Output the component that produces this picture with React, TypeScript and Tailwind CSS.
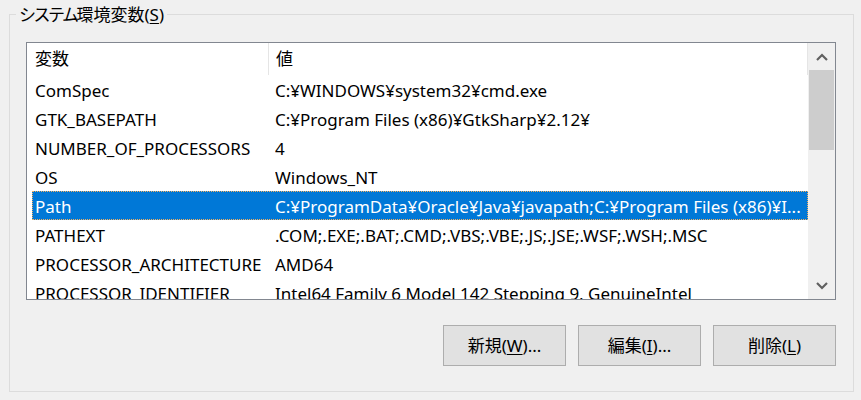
import type { ReactNode } from 'react';

const FONT = { fontFamily: '"Noto Sans", "Noto Sans CJK JP", sans-serif' };

type Row = { name: string; value: string };

const ROWS: Row[] = [
  { name: 'ComSpec', value: 'C:¥WINDOWS¥system32¥cmd.exe' },
  { name: 'GTK_BASEPATH', value: 'C:¥Program Files (x86)¥GtkSharp¥2.12¥' },
  { name: 'NUMBER_OF_PROCESSORS', value: '4' },
  { name: 'OS', value: 'Windows_NT' },
  { name: 'Path', value: 'C:¥ProgramData¥Oracle¥Java¥javapath;C:¥Program Files (x86)¥I...' },
  { name: 'PATHEXT', value: '.COM;.EXE;.BAT;.CMD;.VBS;.VBE;.JS;.JSE;.WSF;.WSH;.MSC' },
  { name: 'PROCESSOR_ARCHITECTURE', value: 'AMD64' },
  { name: 'PROCESSOR_IDENTIFIER', value: 'Intel64 Family 6 Model 142 Stepping 9, GenuineIntel' },
];

const SELECTED = 'Path';

function Chevron({ down = false }: { down?: boolean }) {
  return (
    <svg width="12" height="8" viewBox="0 0 12 8" className="block">
      <polyline
        points={down ? '1,1 6,6 11,1' : '1,7 6,2 11,7'}
        fill="none"
        stroke="#606060"
        strokeWidth="2.2"
      />
    </svg>
  );
}

function Button({ children }: { children: ReactNode }) {
  return (
    <button className="flex h-[41px] w-[123px] items-center justify-center border border-[#adadad] bg-[#e1e1e1] text-[17px] text-black">
      {children}
    </button>
  );
}

export default function App() {
  return (
    <div className="h-[400px] w-[861px] overflow-hidden bg-[#f0f0f0] pl-[9px] pt-[14px] text-black" style={FONT}>
      {/* group box with caption sitting over the top border */}
      <div className="relative h-[378px] w-[845px] border border-[#dcdcdc] pl-[16px] pr-[17px] pt-[27px]">
        <span className="absolute left-[6px] top-[-12px] bg-[#f0f0f0] px-[3px] text-[17px] leading-[24px]">
          <span className="tracking-[-2.5px]">システム</span>
          環境変数(<span className="underline underline-offset-2">S</span>)
        </span>

        {/* list view */}
        <div className="flex h-[258px] w-[810px] border border-[#828790] bg-white">
          <div className="flex min-w-0 flex-1 flex-col">
            <div className="flex h-[32px] shrink-0 items-center text-[17px]">
              <div className="w-[241px] pl-[8px]">変数</div>
              <div className="h-full w-px bg-[#e5e5e5]" />
              <div className="flex-1 pl-[7px]">値</div>
              <div className="h-full w-px bg-[#e5e5e5]" />
            </div>
            <div className="min-h-0 flex-1 overflow-hidden pl-[5px]">
              {ROWS.map((r) => {
                const sel = r.name === SELECTED;
                return (
                  <div
                    key={r.name}
                    className={
                      sel
                        ? 'flex h-[29px] w-[776px] items-center border border-dotted border-[#f5b060] bg-[#0078d7] pt-[2px] text-[17px] text-white'
                        : 'flex h-[29px] w-[776px] items-center border border-transparent pt-[2px] text-[17px]'
                    }
                  >
                    <div className="w-[242px] shrink-0 overflow-hidden whitespace-nowrap pl-[2px]">{r.name}</div>
                    <div className="min-w-0 flex-1 overflow-hidden whitespace-nowrap">{r.value}</div>
                  </div>
                );
              })}
            </div>
          </div>

          {/* vertical scrollbar */}
          <div className="flex w-[27px] shrink-0 flex-col bg-[#f0f0f0] px-px">
            <div className="flex h-[27px] shrink-0 items-center justify-center">
              <Chevron />
            </div>
            <div className="h-[80px] shrink-0 bg-[#cdcdcd]" />
            <div className="flex-1" />
            <div className="flex h-[27px] shrink-0 items-center justify-center">
              <Chevron down />
            </div>
          </div>
        </div>

        <div className="mt-[25px] flex justify-end gap-[12px]">
          <Button>
            新規(<span className="underline underline-offset-2">W</span>)...
          </Button>
          <Button>
            編集(<span className="underline underline-offset-2">I</span>)...
          </Button>
          <Button>
            削除(<span className="underline underline-offset-2">L</span>)
          </Button>
        </div>
      </div>
    </div>
  );
}
